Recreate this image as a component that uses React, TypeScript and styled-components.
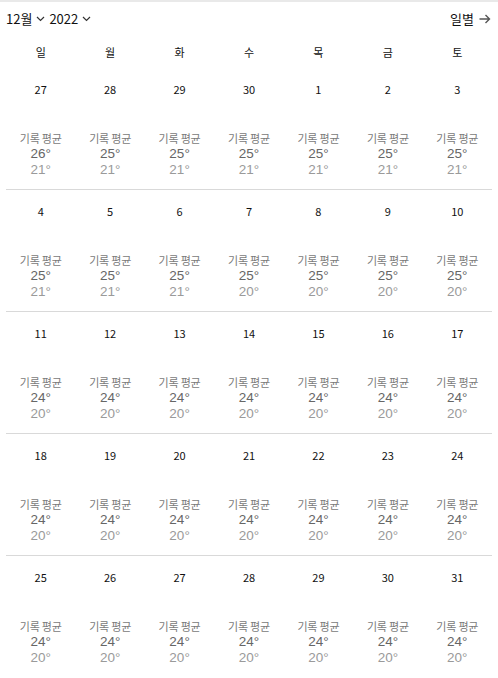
import React from "react";
import styled, { createGlobalStyle } from "styled-components";

const Global = createGlobalStyle`
  html, body { margin: 0; padding: 0; background: #fff; }
  body { font-family: "Noto Sans CJK KR", "Noto Sans", sans-serif; color: #111; }
`;

const Page = styled.div`
  width: 498px;
  border-top: 2px solid #e9e9e9;
  box-sizing: border-box;
`;

const Header = styled.div`
  height: 34px;
  padding: 0 7px 0 6px;
  display: flex;
  align-items: center;
  justify-content: space-between;
`;

const Pickers = styled.div`
  display: flex;
  align-items: center;
  gap: 4px;
`;

const Picker = styled.div`
  display: flex;
  align-items: center;
  gap: 4px;
  font-size: 13px;
  line-height: 16px;
  color: #111;
`;

const ViewLink = styled.div`
  display: flex;
  align-items: center;
  gap: 5px;
  font-size: 13px;
  line-height: 16px;
  color: #111;
`;

const Grid = styled.div`
  padding: 0 6px;
`;

const DayNames = styled.div`
  height: 32px;
  display: grid;
  grid-template-columns: repeat(7, 1fr);
  align-items: center;
`;

const DayName = styled.div`
  text-align: center;
  font-size: 11px;
  line-height: 16px;
  color: #111;
`;

const Week = styled.div<{ $last?: boolean }>`
  display: grid;
  grid-template-columns: repeat(7, 1fr);
  padding: 13px 0 11px;
  border-bottom: 1px solid ${(p) => (p.$last ? "transparent" : "#d9d9d9")};
`;

const Cell = styled.div`
  display: flex;
  flex-direction: column;
  align-items: center;
`;

const DateNum = styled.div`
  font-size: 11px;
  line-height: 16px;
  color: #111;
  margin-bottom: 33px;
`;

const Label = styled.div`
  font-size: 11px;
  line-height: 16px;
  color: #7a7a7a;
  letter-spacing: -0.2px;
`;

const Temp = styled.div<{ $low?: boolean }>`
  font-family: "Liberation Sans", Arial, sans-serif;
  font-size: 13.5px;
  line-height: 16px;
  color: ${(p) => (p.$low ? "#9a9a9a" : "#666")};
`;

const Chevron = () => (
  <svg width="9" height="6" viewBox="0 0 9 6" fill="none">
    <path d="M1 1l3.5 3.5L8 1" stroke="#333" strokeWidth="1.2" />
  </svg>
);

const Arrow = () => (
  <svg width="12" height="10" viewBox="0 0 12 10" fill="none">
    <path d="M0.5 5h10M6.5 1l4 4-4 4" stroke="#555" strokeWidth="1.4" />
  </svg>
);

type Day = { d: number; hi: number; lo: number };

const weeks: Day[][] = [
  [
    { d: 27, hi: 26, lo: 21 },
    { d: 28, hi: 25, lo: 21 },
    { d: 29, hi: 25, lo: 21 },
    { d: 30, hi: 25, lo: 21 },
    { d: 1, hi: 25, lo: 21 },
    { d: 2, hi: 25, lo: 21 },
    { d: 3, hi: 25, lo: 21 },
  ],
  [
    { d: 4, hi: 25, lo: 21 },
    { d: 5, hi: 25, lo: 21 },
    { d: 6, hi: 25, lo: 21 },
    { d: 7, hi: 25, lo: 20 },
    { d: 8, hi: 25, lo: 20 },
    { d: 9, hi: 25, lo: 20 },
    { d: 10, hi: 25, lo: 20 },
  ],
  [11, 12, 13, 14, 15, 16, 17].map((d) => ({ d, hi: 24, lo: 20 })),
  [18, 19, 20, 21, 22, 23, 24].map((d) => ({ d, hi: 24, lo: 20 })),
  [25, 26, 27, 28, 29, 30, 31].map((d) => ({ d, hi: 24, lo: 20 })),
];

const dayNames = ["일", "월", "화", "수", "목", "금", "토"];

export default function App() {
  return (
    <>
      <Global />
      <Page>
        <Header>
          <Pickers>
            <Picker>
              12월 <Chevron />
            </Picker>
            <Picker>
              2022 <Chevron />
            </Picker>
          </Pickers>
          <ViewLink>
            일별 <Arrow />
          </ViewLink>
        </Header>
        <Grid>
          <DayNames>
            {dayNames.map((n) => (
              <DayName key={n}>{n}</DayName>
            ))}
          </DayNames>
          {weeks.map((w, i) => (
            <Week key={i} $last={i === weeks.length - 1}>
              {w.map((day) => (
                <Cell key={day.d}>
                  <DateNum>{day.d}</DateNum>
                  <Label>기록 평균</Label>
                  <Temp>{day.hi}°</Temp>
                  <Temp $low>{day.lo}°</Temp>
                </Cell>
              ))}
            </Week>
          ))}
        </Grid>
      </Page>
    </>
  );
}
